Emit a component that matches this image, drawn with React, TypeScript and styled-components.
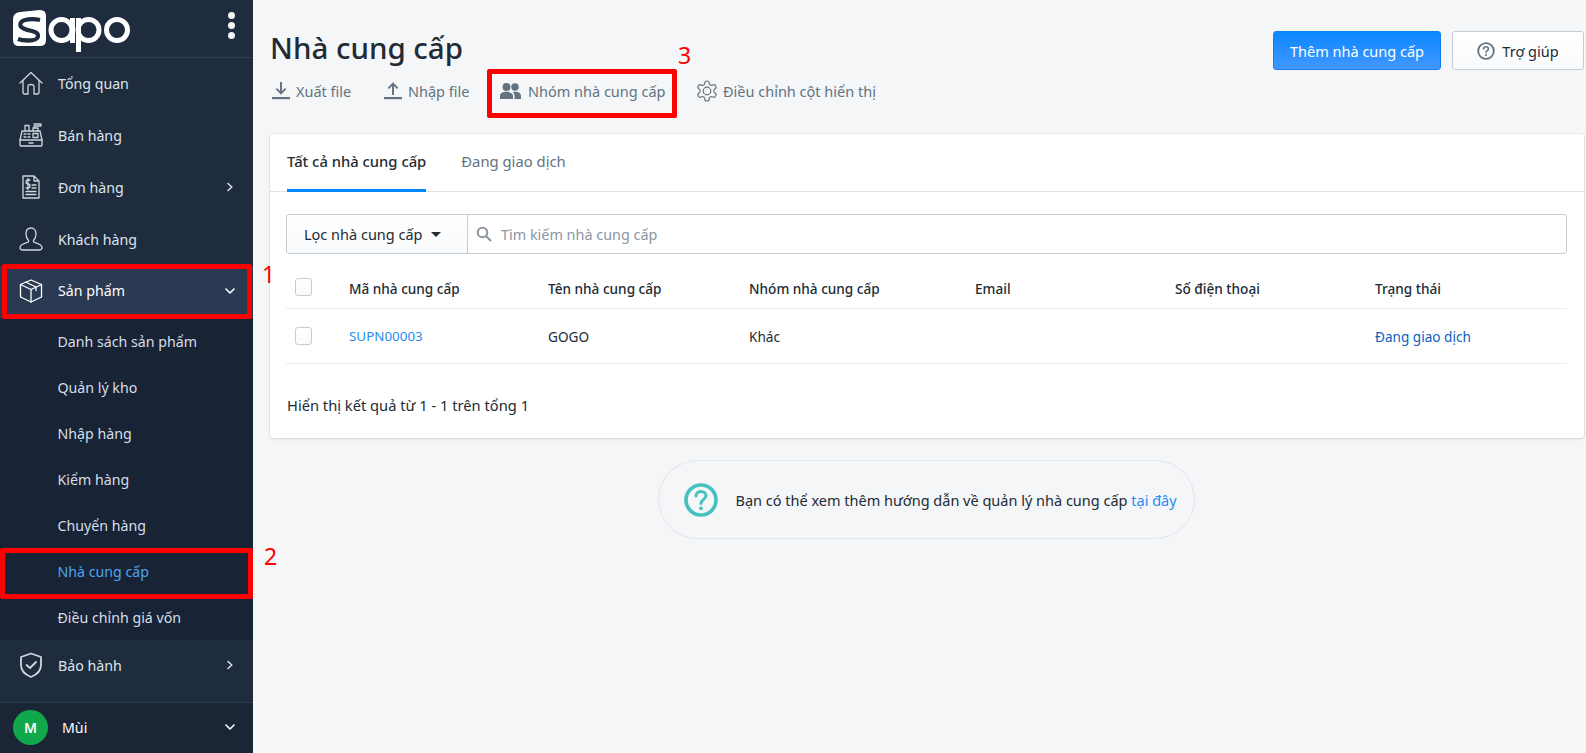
import React from "react";
import styled, { createGlobalStyle } from "styled-components";

const Global = createGlobalStyle`
  html, body { margin: 0; padding: 0; height: 100%; background: #f4f6f8; }
  body { font-family: "Noto Sans", "Open Sans", sans-serif; font-size: 13px; color: #212b35; overflow: hidden; }
  * { box-sizing: border-box; }
`;

const Page = styled.div`
  position: relative;
  display: flex;
  width: 1586px;
  height: 753px;
  overflow: hidden;
`;

const Sidebar = styled.aside`
  width: 253px;
  flex: none;
  display: flex;
  flex-direction: column;
  background: #1f2c3e;
  color: #dfe7ef;
`;

const Brand = styled.div`
  height: 58px;
  flex: none;
  display: flex;
  align-items: flex-start;
  justify-content: space-between;
  padding: 10px 18px 0 13px;
  border-bottom: 1px solid #2c3e52;
`;

const Kebab = styled.div`
  display: flex;
  flex-direction: column;
  gap: 3px;
  margin: 2px 0 0;
  span { width: 7px; height: 7px; border-radius: 50%; background: #f2f4f6; }
`;

const Nav = styled.nav`
  flex: 1;
  display: flex;
  flex-direction: column;
`;

const NavItem = styled.div<{ $active?: boolean }>`
  height: 52px;
  flex: none;
  display: flex;
  align-items: center;
  padding: 0 17px ${(p) => (p.$active ? "3px" : "2px")} 19px;
  font-size: 14.2px;
  color: ${(p) => (p.$active ? "#ffffff" : "#dce5ee")};
  background: ${(p) => (p.$active ? "#2a3a52" : "transparent")};
`;

const NavIcon = styled.span`
  width: 24px;
  height: 24px;
  margin-right: 15px;
  display: flex;
  align-items: center;
  justify-content: center;
  flex: none;
`;

const NavLabel = styled.span`
  flex: 1;
`;

const Sub = styled.div`
  background: #182335;
  display: flex;
  flex-direction: column;
`;

const SubItem = styled.div<{ $current?: boolean }>`
  height: 46px;
  display: flex;
  align-items: center;
  padding-left: 57.5px;
  font-size: 14.2px;
  color: ${(p) => (p.$current ? "#4ba6f0" : "#d5dfe9")};
`;

const Footer = styled.div`
  height: 51px;
  flex: none;
  display: flex;
  align-items: center;
  padding: 0 17px 2px 13px;
  background: #1a2535;
  border-top: 1px solid #2c3e52;
  color: #fff;
  font-size: 14.2px;
`;

const Avatar = styled.span`
  width: 35px;
  height: 35px;
  border-radius: 50%;
  background: #0fa84b;
  color: #fff;
  font-weight: 600;
  font-size: 14px;
  display: flex;
  align-items: center;
  justify-content: center;
  margin-right: 14px;
`;

const Main = styled.main`
  flex: 1;
  min-width: 0;
  padding: 0 2px 0 17px;
`;

const Header = styled.header`
  height: 134px;
  display: flex;
  justify-content: space-between;
  align-items: flex-start;
`;

const TitleBlock = styled.div`
  display: flex;
  flex-direction: column;
`;

const Title = styled.h1`
  margin: 24px 0 0;
  font-size: 29.5px;
  line-height: 48px;
  font-weight: 500;
  color: #212b35;
`;

const Toolbar = styled.div`
  display: flex;
  align-items: center;
  height: 20px;
  margin-top: 9px;
  padding-left: 2px;
`;

const Tool = styled.span<{ $w: number }>`
  width: ${(p) => p.$w}px;
  flex: none;
  display: flex;
  align-items: center;
  font-size: 14.5px;
  color: #637381;
  white-space: nowrap;
`;

const ToolIcon = styled.span<{ $w: number }>`
  width: ${(p) => p.$w}px;
  display: flex;
  flex: none;
  align-items: center;
`;

const Actions = styled.div`
  display: flex;
  gap: 11px;
  margin-top: 31px;
`;

const Primary = styled.button`
  width: 168px;
  height: 39px;
  border: 1px solid #0f80e8;
  border-radius: 3px;
  background: linear-gradient(180deg, #0a88ff, #4297ff);
  color: #fff;
  font: 14.5px "Noto Sans", sans-serif;
`;

const Help = styled.button`
  width: 132px;
  height: 39px;
  border: 1px solid #c4cdd5;
  border-radius: 3px;
  background: linear-gradient(180deg, #fff, #f9fafb);
  color: #212b35;
  font: 14.5px "Noto Sans", sans-serif;
  display: flex;
  align-items: center;
  justify-content: center;
  gap: 7px;
`;

const Card = styled.section`
  height: 304px;
  background: #fff;
  border-radius: 3px;
  box-shadow: 0 0 0 1px rgba(63, 63, 68, 0.05), 0 1px 3px rgba(63, 63, 68, 0.15);
`;

const Tabs = styled.div`
  height: 58px;
  display: flex;
  padding-left: 17px;
  gap: 35px;
  border-bottom: 1px solid #dfe3e8;
`;

const Tab = styled.div<{ $active?: boolean }>`
  height: 58px;
  display: flex;
  align-items: center;
  padding-bottom: 2px;
  font-size: 14.8px;
  font-weight: ${(p) => (p.$active ? 500 : 400)};
  color: ${(p) => (p.$active ? "#212b35" : "#637381")};
  border-bottom: 3px solid ${(p) => (p.$active ? "#0088ff" : "transparent")};
`;

const Body = styled.div`
  padding: 22px 17px 0 16px;
`;

const FilterBar = styled.div`
  height: 40px;
  display: flex;
  border: 1px solid #c4cdd5;
  border-radius: 3px;
`;

const FilterButton = styled.div`
  width: 181px;
  flex: none;
  display: flex;
  align-items: center;
  padding-left: 17px;
  gap: 7px;
  font-size: 14.5px;
  background: linear-gradient(180deg, #fff, #f9fafb);
  border-right: 1px solid #c4cdd5;
  border-radius: 3px 0 0 3px;
`;

const Caret = styled.span`
  width: 0;
  height: 0;
  margin-left: 1px;
  border-left: 5px solid transparent;
  border-right: 5px solid transparent;
  border-top: 5px solid #212b35;
`;

const Search = styled.div`
  flex: 1;
  display: flex;
  align-items: center;
  padding-left: 8px;
  gap: 9px;
  font-size: 14.4px;
  color: #8a96a3;
`;

const Row = styled.div<{ $head?: boolean }>`
  display: grid;
  grid-template-columns: 63px 199px 201px 226px 200px 200px 1fr;
  align-items: center;
  height: 55px;
  padding-top: ${(p) => (p.$head ? "15px" : "0")};
  border-bottom: 1px solid #eaedf0;
  font-weight: ${(p) => (p.$head ? 500 : 400)};
  font-size: 13.6px;
  color: #212b35;
`;

const CheckCell = styled.span<{ $up?: boolean }>`
  padding-left: 9px;
  margin-bottom: ${(p) => (p.$up ? "4px" : "0")};
  display: flex;
`;

const Check = styled.span`
  width: 17px;
  height: 18px;
  border: 1px solid #c4cdd5;
  border-radius: 3px;
  background: linear-gradient(180deg, #fff, #f9fafb);
`;

const Code = styled.span`
  color: #2a8cf0;
  font-size: 13.4px;
`;

const Status = styled.span`
  color: #0b5fc0;
`;

const Summary = styled.div`
  margin-top: 31px;
  font-size: 14.7px;
  line-height: 20px;
  color: #212b35;
  padding-left: 1px;
`;

const TipWrap = styled.div`
  display: flex;
  justify-content: center;
  margin-top: 22px;
  padding-right: 2px;
`;

const Tip = styled.div`
  width: 537px;
  height: 79px;
  display: flex;
  align-items: center;
  padding-left: 25px;
  gap: 18px;
  border: 1px solid #e2e5e9;
  border-radius: 40px;
  font-size: 14.5px;
  color: #212b35;
`;

const TipText = styled.span`
  white-space: nowrap;
  a { color: #2a8cf0; text-decoration: none; }
`;

const Highlight = styled.div<{ $x: number; $y: number; $w: number; $h: number }>`
  position: absolute;
  left: ${(p) => p.$x}px;
  top: ${(p) => p.$y}px;
  width: ${(p) => p.$w}px;
  height: ${(p) => p.$h}px;
  border: 5px solid #ff0000;
  border-radius: 2px;
  pointer-events: none;
`;

const Mark = styled.span<{ $x: number; $y: number }>`
  position: absolute;
  left: ${(p) => p.$x}px;
  top: ${(p) => p.$y}px;
  font-size: 23px;
  line-height: 28px;
  color: #ff0000;
`;

const stroke = { fill: "none", stroke: "#cfd6de", strokeWidth: 1.3, strokeLinecap: "round", strokeLinejoin: "round" } as const;

const Logo = () => (
  <svg width="118" height="43" viewBox="0 0 118 43">
    <path d="M7 2 L27 0 Q33 0 33 6 L33 30 Q33 36 27 36 L6 36 Q0 36 0 30 L0 9 Q0 3 7 2Z" fill="#fff" />
    <path d="M27 10 C22 9 16 9 12 10 C8 11 6.500 14 7.500 16 C9 19 14 20 19 21 C23 22 25.500 24 25 26.500 C24.500 29.500 20 30.500 15 30.500 C11 30.500 7.500 30 5 29" fill="none" stroke="#1f2c3e" strokeWidth="4.300" strokeLinecap="butt" />
    <circle cx="48.500" cy="20" r="10.500" fill="none" stroke="#fff" strokeWidth="5" />
    <rect x="57" y="8" width="5" height="25" fill="#fff" />
    <circle cx="75.500" cy="20" r="10.500" fill="none" stroke="#fff" strokeWidth="5" />
    <rect x="63" y="8" width="5" height="34" fill="#fff" />
    <circle cx="104" cy="20" r="10.500" fill="none" stroke="#fff" strokeWidth="5" />
  </svg>
);

const HomeIcon = () => (
  <svg width="24" height="24" viewBox="0 0 24 24" {...stroke}>
    <path d="M1 12 L12 1.500 L23 12" />
    <path d="M4 10 V21 Q4 23 6 23 H9 V15.500 Q9 13.500 12 13.500 Q15 13.500 15 15.500 V23 H18 Q20 23 20 21 V10" />
  </svg>
);

const RegisterIcon = () => (
  <svg width="24" height="24" viewBox="0 0 24 24" {...stroke}>
    <path d="M1 17 L3 8 H21 L23 17 V22 Q23 23 22 23 H2 Q1 23 1 22 Z" />
    <path d="M1 17 H23 M10 20 H14" />
    <path d="M6 8 V2.500 H10 V8 M14 8 V5 H19 V8 M15 5 V3 H22 V1 H15" />
    <path d="M5 11 H7 M9 11 H11 M5 14 H7 M9 14 H11 M14 10.500 H19 V14.500 H14 Z" />
  </svg>
);

const InvoiceIcon = () => (
  <svg width="24" height="24" viewBox="0 0 24 24" {...stroke}>
    <path d="M4 1 H15 L20 6 V23 H4 Z M15 1 V6 H20" />
    <path d="M11 5 H8.500 Q7 5 7 7 Q7 9 9 9 Q11 9 11 11 Q11 13 9 13 H7 M9 3.500 V14.500" />
    <path d="M13 10 H17 M13 13 H17 M7 16.500 H17 M7 19.500 H17" />
  </svg>
);

const UserIcon = () => (
  <svg width="24" height="24" viewBox="0 0 24 24" {...stroke}>
    <path d="M12 1 C8.500 1 7 4 7 7 C7 10.500 9 13 9.500 13.500 V15 C7 16 1 17 1 20.500 C1 22.500 2.500 23 4 23 H20 C21.500 23 23 22.500 23 20.500 C23 17 17 16 14.500 15 V13.500 C15 13 17 10.500 17 7 C17 4 15.500 1 12 1Z" />
  </svg>
);

const BoxIcon = () => (
  <svg width="24" height="24" viewBox="0 0 24 24" fill="none" stroke="#fff" strokeWidth="1.3" strokeLinejoin="round" strokeLinecap="round">
    <path d="M12 1 L22.500 5.500 V18 L12 23 L1.500 18 V5.500 Z" />
    <path d="M1.500 5.500 L12 10.500 L22.500 5.500 M12 10.500 V23 M6.500 3 L17 8 V11.500" />
  </svg>
);

const ShieldIcon = () => (
  <svg width="24" height="26" viewBox="0 0 24 26" fill="none" stroke="#cfd6de" strokeWidth="1.800" strokeLinejoin="round" strokeLinecap="round">
    <path d="M12 1.500 L22 5 V13 C22 19 17 23 12 25 C7 23 2 19 2 13 V5 Z" />
    <path d="M7.500 13 L11 16 L17 10" />
  </svg>
);

const Chevron = ({ open, color = "#d5dfe9" }: { open?: boolean; color?: string }) => (
  <svg width="12" height="12" viewBox="0 0 12 12" fill="none" stroke={color} strokeWidth="1.600" strokeLinecap="round" strokeLinejoin="round">
    <path d={open ? "M2 4 L6 8 L10 4" : "M4 2.500 L7.800 6 L4 9.500"} />
  </svg>
);

const DownloadIcon = () => (
  <svg width="18" height="20" viewBox="0 0 18 20" fill="#637381">
    <path d="M8 1 H10 V10 L13 7 L14.300 8.300 L9 13.800 L3.700 8.300 L5 7 L8 10Z" />
    <rect x="0" y="16" width="18" height="2.200" />
  </svg>
);

const UploadIcon = () => (
  <svg width="18" height="20" viewBox="0 0 18 20" fill="#637381">
    <path d="M8 14 H10 V5 L13 8 L14.300 6.700 L9 1.200 L3.700 6.700 L5 8 L8 5Z" />
    <rect x="0" y="16" width="18" height="2.200" />
  </svg>
);

const GroupIcon = () => (
  <svg width="21" height="18" viewBox="0 0 21 18" fill="#637381">
    <circle cx="6.500" cy="5" r="4" />
    <circle cx="15" cy="5" r="3.700" />
    <path d="M0 17 V14 C0 11 3 9.800 6.500 9.800 C10 9.800 13 11 13 14 V17Z" />
    <path d="M14.500 17 V14 C14.500 12 13.500 10.800 12.700 10.100 C13.400 9.900 14.200 9.800 15 9.800 C18 9.800 21 11 21 14 V17Z" />
  </svg>
);

const GearIcon = () => (
  <svg width="24" height="24" viewBox="0 0 24 24" fill="none" stroke="#637381" strokeWidth="1.200" strokeLinecap="round" strokeLinejoin="round">
    <circle cx="12" cy="12" r="3.800" />
    <path d="M12.220 2h-.440a2 2 0 0 0-2 2v.180a2 2 0 0 1-1 1.730l-.430.250a2 2 0 0 1-2 0l-.150-.080a2 2 0 0 0-2.730.730l-.220.380a2 2 0 0 0 .730 2.730l.150.100a2 2 0 0 1 1 1.720v.510a2 2 0 0 1-1 1.740l-.150.090a2 2 0 0 0-.730 2.730l.220.380a2 2 0 0 0 2.730.730l.150-.080a2 2 0 0 1 2 0l.430.250a2 2 0 0 1 1 1.730V20a2 2 0 0 0 2 2h.440a2 2 0 0 0 2-2v-.180a2 2 0 0 1 1-1.730l.430-.250a2 2 0 0 1 2 0l.150.080a2 2 0 0 0 2.730-.730l.220-.390a2 2 0 0 0-.730-2.730l-.150-.080a2 2 0 0 1-1-1.740v-.500a2 2 0 0 1 1-1.740l.150-.090a2 2 0 0 0 .730-2.730l-.220-.380a2 2 0 0 0-2.730-.730l-.150.080a2 2 0 0 1-2 0l-.430-.250a2 2 0 0 1-1-1.730V4a2 2 0 0 0-2-2z" />
  </svg>
);

const HelpIcon = () => (
  <svg width="18" height="18" viewBox="0 0 18 18" fill="none">
    <circle cx="9" cy="9" r="7.800" stroke="#637381" strokeWidth="1.800" />
    <path d="M6.600 7 C6.600 5.600 7.700 4.800 9 4.800 C10.400 4.800 11.400 5.700 11.400 6.900 C11.400 8.600 9 8.600 9 10.400" stroke="#637381" strokeWidth="1.600" strokeLinecap="round" />
    <circle cx="9" cy="12.900" r="1" fill="#637381" />
  </svg>
);

const SearchIcon = () => (
  <svg width="16" height="16" viewBox="0 0 16 16" fill="none" stroke="#8a96a3" strokeWidth="2" strokeLinecap="round">
    <circle cx="6.500" cy="6.500" r="4.800" />
    <path d="M10.200 10.200 L14.500 14.500" />
  </svg>
);

const TipIcon = () => (
  <svg width="34" height="34" viewBox="0 0 34 34" fill="none">
    <circle cx="17" cy="17" r="15" stroke="#47c1bf" strokeWidth="3.600" />
    <path d="M12 13 C12 10 14.400 8.500 17 8.500 C20 8.500 22 10.300 22 12.800 C22 16.300 17 16.500 17 20.500" stroke="#47c1bf" strokeWidth="3" strokeLinecap="round" />
    <circle cx="17" cy="25.300" r="1.900" fill="#47c1bf" />
  </svg>
);

const columns = ["Mã nhà cung cấp", "Tên nhà cung cấp", "Nhóm nhà cung cấp", "Email", "Số điện thoại", "Trạng thái"];

export default function App() {
  return (
    <Page>
      <Global />
      <Sidebar>
        <Brand>
          <Logo />
          <Kebab><span /><span /><span /></Kebab>
        </Brand>
        <Nav>
          <NavItem><NavIcon><HomeIcon /></NavIcon><NavLabel>Tổng quan</NavLabel></NavItem>
          <NavItem><NavIcon><RegisterIcon /></NavIcon><NavLabel>Bán hàng</NavLabel></NavItem>
          <NavItem><NavIcon><InvoiceIcon /></NavIcon><NavLabel>Đơn hàng</NavLabel><Chevron /></NavItem>
          <NavItem><NavIcon><UserIcon /></NavIcon><NavLabel>Khách hàng</NavLabel></NavItem>
          <NavItem $active><NavIcon><BoxIcon /></NavIcon><NavLabel>Sản phẩm</NavLabel><Chevron open color="#fff" /></NavItem>
          <Sub>
            <SubItem>Danh sách sản phẩm</SubItem>
            <SubItem>Quản lý kho</SubItem>
            <SubItem>Nhập hàng</SubItem>
            <SubItem>Kiểm hàng</SubItem>
            <SubItem>Chuyển hàng</SubItem>
            <SubItem $current>Nhà cung cấp</SubItem>
            <SubItem>Điều chỉnh giá vốn</SubItem>
          </Sub>
          <NavItem><NavIcon><ShieldIcon /></NavIcon><NavLabel>Bảo hành</NavLabel><Chevron /></NavItem>
        </Nav>
        <Footer>
          <Avatar>M</Avatar>
          <NavLabel>Mùi</NavLabel>
          <Chevron open color="#fff" />
        </Footer>
      </Sidebar>
      <Main>
        <Header>
          <TitleBlock>
            <Title>Nhà cung cấp</Title>
            <Toolbar>
              <Tool $w={112}><ToolIcon $w={24}><DownloadIcon /></ToolIcon>Xuất file</Tool>
              <Tool $w={116}><ToolIcon $w={24}><UploadIcon /></ToolIcon>Nhập file</Tool>
              <Tool $w={195}><ToolIcon $w={28}><GroupIcon /></ToolIcon>Nhóm nhà cung cấp</Tool>
              <Tool $w={186}><ToolIcon $w={28}><GearIcon /></ToolIcon>Điều chỉnh cột hiển thị</Tool>
            </Toolbar>
          </TitleBlock>
          <Actions>
            <Primary>Thêm nhà cung cấp</Primary>
            <Help><HelpIcon />Trợ giúp</Help>
          </Actions>
        </Header>
        <Card>
          <Tabs>
            <Tab $active>Tất cả nhà cung cấp</Tab>
            <Tab>Đang giao dịch</Tab>
          </Tabs>
          <Body>
            <FilterBar>
              <FilterButton>Lọc nhà cung cấp <Caret /></FilterButton>
              <Search><SearchIcon />Tìm kiếm nhà cung cấp</Search>
            </FilterBar>
            <Row $head>
              <CheckCell $up><Check /></CheckCell>
              {columns.map((c) => <span key={c}>{c}</span>)}
            </Row>
            <Row>
              <CheckCell><Check /></CheckCell>
              <Code>SUPN00003</Code>
              <span>GOGO</span>
              <span>Khác</span>
              <span />
              <span />
              <Status>Đang giao dịch</Status>
            </Row>
            <Summary>Hiển thị kết quả từ 1 - 1 trên tổng 1</Summary>
          </Body>
        </Card>
        <TipWrap>
          <Tip>
            <TipIcon />
            <TipText>Bạn có thể xem thêm hướng dẫn về quản lý nhà cung cấp <a href="#tip">tại đây</a></TipText>
          </Tip>
        </TipWrap>
      </Main>
      <Highlight $x={2} $y={264} $w={250} $h={55} />
      <Highlight $x={0} $y={548} $w={253} $h={51} />
      <Highlight $x={487} $y={69} $w={190} $h={49} />
      <Mark $x={262} $y={260}>1</Mark>
      <Mark $x={264} $y={542}>2</Mark>
      <Mark $x={678} $y={41}>3</Mark>
    </Page>
  );
}
